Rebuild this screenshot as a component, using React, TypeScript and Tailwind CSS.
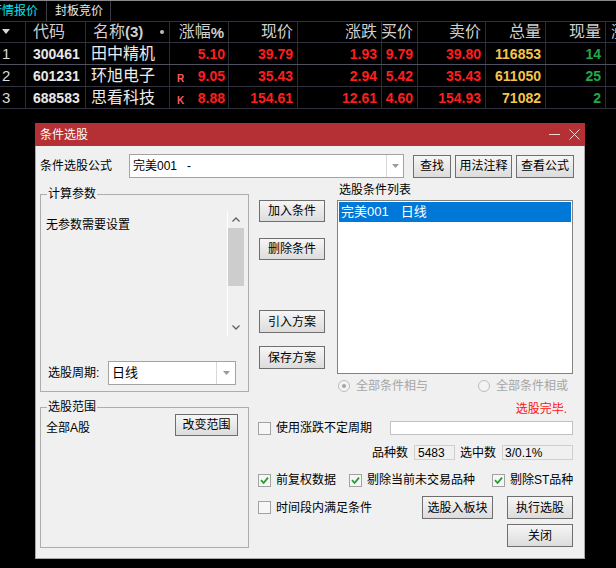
import React from 'react';

const FONT = "font-['Liberation_Sans','Noto_Sans_CJK_SC',sans-serif]";
const GRID = 'grid grid-cols-[26px_60px_84px_59px_69px_84px_36px_68px_60px_60px_10px]';

type Row = {
  no: string;
  code: string;
  name: string;
  tag?: string;
  pct: string;
  price: string;
  chg: string;
  bid: string;
  ask: string;
  vol: string;
  cur: string;
  line: string;
};

const rows: Row[] = [
  { no: '1', code: '300461', name: '田中精机', pct: '5.10', price: '39.79', chg: '1.93', bid: '9.79', ask: '39.80', vol: '116853', cur: '14', line: 'border-[#4f5060]' },
  { no: '2', code: '601231', name: '环旭电子', tag: 'R', pct: '9.05', price: '35.43', chg: '2.94', bid: '5.42', ask: '35.43', vol: '611050', cur: '25', line: 'border-[#30313c]' },
  { no: '3', code: '688583', name: '思看科技', tag: 'K', pct: '8.88', price: '154.61', chg: '12.61', bid: '4.60', ask: '154.93', vol: '71082', cur: '2', line: 'border-[#30313c]' },
];

const cell = 'border-r border-[#2a2c38] flex items-center overflow-hidden whitespace-nowrap';
const num = `${cell} justify-end pr-[4px]`;

function QuoteTable() {
  return (
    <div className="text-[#e6e6e6]">
      <div className="h-px bg-[#8a8a8a]" />
      <div className="h-[21px] flex border-b border-[#30313c] text-[12px]">
        <div className="w-[47px] border-r border-[#3a3b46] flex items-center overflow-hidden">
          <span className="ml-[-10px] text-[#00e4f0] whitespace-nowrap">行情报价</span>
        </div>
        <div className="w-[64px] border-r border-[#3a3b46] flex items-center pl-[8px] text-[#e8e8e8]">封板竞价</div>
      </div>
      <div className={`${GRID} h-[21px] border-b border-[#30313c] text-[16px] leading-none text-[#cfcfcf]`}>
        <div className={`${cell} pl-[2px]`}>
          <svg width="8" height="6" viewBox="0 0 8 6"><path d="M0 0H8L4 5Z" fill="#d8d8d8" /></svg>
        </div>
        <div className={`${cell} pl-[7px]`}>代码</div>
        <div className={`${cell} pl-[7px] justify-between pr-[5px]`}>
          <span>名称<span className="font-bold text-[15px]">(3)</span></span>
          <span className="w-[4px] h-[4px] rounded-full bg-[#bdbdbd]" />
        </div>
        <div className={`${num} pr-[3px]`}>涨幅<span className="font-bold text-[15px]">%</span></div>
        <div className={num}>现价</div>
        <div className={num}>涨跌</div>
        <div className={num}>买价</div>
        <div className={num}>卖价</div>
        <div className={num}>总量</div>
        <div className={num}>现量</div>
        <div className="flex items-center pl-[5px] overflow-hidden whitespace-nowrap">涨幅</div>
      </div>
      {rows.map((r) => (
        <div key={r.no} className={`${GRID} h-[22px] border-b ${r.line} text-[14px] leading-none`}>
          <div className={`${cell} pl-[2px] text-[15px] text-[#dcdcdc]`}>{r.no}</div>
          <div className={`${cell} pl-[7px] font-bold text-[#e8e8e8]`}>{r.code}</div>
          <div className={`${cell} pl-[5px] text-[16px] text-[#ececec]`}>{r.name}</div>
          <div className={`${cell} justify-between pl-[7px] pr-[3px] font-bold text-[#ff1e1e]`}>
            <span className="self-end pb-[2px] text-[10px] text-[#ff5a5a]">{r.tag ?? ''}</span>
            <span>{r.pct}</span>
          </div>
          <div className={`${num} font-bold text-[#ff1e1e]`}>{r.price}</div>
          <div className={`${num} font-bold text-[#ff1e1e]`}>{r.chg}</div>
          <div className={`${num} font-bold text-[#ff1e1e]`}>{r.bid}</div>
          <div className={`${num} font-bold text-[#ff1e1e]`}>{r.ask}</div>
          <div className={`${num} font-bold text-[#f7c44c]`}>{r.vol}</div>
          <div className={`${num} font-bold text-[#22a84a]`}>{r.cur}</div>
          <div />
        </div>
      ))}
    </div>
  );
}

function Btn({ className, children }: { className: string; children: React.ReactNode }) {
  return (
    <div className={`flex items-center justify-center border border-[#6f6f6f] bg-linear-to-b from-[#f6f6f6] to-[#dcdcdc] text-[12px] leading-none text-black whitespace-nowrap ${className}`}>
      {children}
    </div>
  );
}

function Check({ checked }: { checked?: boolean }) {
  return (
    <div className="w-[13px] h-[13px] shrink-0 border border-[#a2a2a2] bg-[#f6f6f6] flex items-center justify-center">
      {checked && (
        <svg width="9" height="9" viewBox="0 0 9 9">
          <path d="M1 4.2L3.6 7L8 1.6" stroke="#1e9e2a" strokeWidth="1.8" fill="none" />
        </svg>
      )}
    </div>
  );
}

function Radio({ on }: { on?: boolean }) {
  return (
    <div className="w-[12px] h-[12px] shrink-0 rounded-full border border-[#bdbdbd] bg-[#f3f3f3] flex items-center justify-center">
      {on && <div className="w-[4px] h-[4px] rounded-full bg-[#a4a4a4]" />}
    </div>
  );
}

function Arrow() {
  return (
    <svg width="7" height="4" viewBox="0 0 7 4"><path d="M0 0H7L3.5 4Z" fill="#9a9a9a" /></svg>
  );
}

function Dialog() {
  return (
    <div className="absolute left-[35px] top-[123px] w-[550px] h-[436px] flex flex-col text-[12px] text-black">
      <div className="h-[23px] shrink-0 bg-[#b43035] flex items-center pl-[5px] text-white">
        <span className="flex-1">条件选股</span>
        <div className="w-[11px] h-px bg-[#f2d6d6] mr-[9px]" />
        <svg width="11" height="11" viewBox="0 0 11 11" className="mr-[5px]">
          <path d="M0.5 0.5L10.5 10.5M10.5 0.5L0.5 10.5" stroke="#f2d6d6" strokeWidth="1" />
        </svg>
      </div>
      <div className="flex-1 bg-[#f0f0f0] border-x border-b border-[#a9a9a9]">
        <div className="mt-[8px] h-[24px] flex items-center">
          <div className="w-[93px] pl-[4px]">条件选股公式</div>
          <div className="w-[275px] h-[24px] bg-white border border-[#a3a3a3] flex items-center">
            <div className="flex-1 pl-[3px]">完美001<span className="ml-[10px]">-</span></div>
            <div className="w-[17px] h-full border-l border-[#d8d8d8] flex items-center justify-center"><Arrow /></div>
          </div>
          <Btn className="ml-[9px] w-[38px] h-[23px]">查找</Btn>
          <Btn className="ml-[4px] w-[57px] h-[23px]">用法注释</Btn>
          <Btn className="ml-[4px] w-[58px] h-[23px]">查看公式</Btn>
        </div>

        <div className="mt-[4px] flex">
          <div className="ml-[4px] w-[209px]">
            <div className="mt-[12px] h-[198px] relative border border-[#adadad]">
              <span className="absolute left-[6px] -top-[8px] px-px bg-[#f0f0f0] leading-[14px]">计算参数</span>
              <div className="pt-[16px] h-[141px] flex">
                <div className="flex-1 pl-[5px] pt-[7px] leading-[14px]">无参数需要设置</div>
                <div className="w-[17px] mr-[4px] border-l border-white flex flex-col">
                  <div className="h-[17px] flex items-center justify-center">
                    <svg width="8" height="5" viewBox="0 0 8 5"><path d="M0.5 4.5L4 1L7.5 4.5" stroke="#606060" strokeWidth="1.3" fill="none" /></svg>
                  </div>
                  <div className="h-[58px] bg-[#cdcdcd]" />
                  <div className="flex-1" />
                  <div className="h-[17px] flex items-center justify-center">
                    <svg width="8" height="5" viewBox="0 0 8 5"><path d="M0.5 0.5L4 4L7.5 0.5" stroke="#606060" strokeWidth="1.3" fill="none" /></svg>
                  </div>
                </div>
              </div>
              <div className="mt-[25px] h-[24px] flex items-center">
                <div className="w-[67px] pl-[7px]">选股周期:</div>
                <div className="w-[128px] h-[24px] bg-white border border-[#a3a3a3] flex items-center">
                  <div className="flex-1 pl-[3px] text-[13px]">日线</div>
                  <div className="w-[19px] h-full border-l border-[#d8d8d8] flex items-center justify-center"><Arrow /></div>
                </div>
              </div>
            </div>
            <div className="mt-[15px] h-[141px] relative border border-[#adadad]">
              <span className="absolute left-[6px] -top-[8px] px-px bg-[#f0f0f0] leading-[14px]">选股范围</span>
              <div className="pt-[6px] flex justify-between items-start">
                <div className="pl-[5px] pt-[7px] leading-[14px]">全部A股</div>
                <Btn className="mr-[10px] w-[63px] h-[22px]">改变范围</Btn>
              </div>
            </div>
          </div>

          <div className="ml-[9px] w-[316px]">
            <div className="flex">
              <div className="ml-px w-[66px] flex flex-col">
                <Btn className="mt-[18px] h-[22px]">加入条件</Btn>
                <Btn className="mt-[16px] h-[22px]">删除条件</Btn>
                <Btn className="mt-[50px] h-[23px]">引入方案</Btn>
                <Btn className="mt-[13px] h-[23px]">保存方案</Btn>
              </div>
              <div className="ml-[12px] w-[236px]">
                <div className="h-[18px] pl-[2px] leading-[16px]">选股条件列表</div>
                <div className="h-[174px] bg-white border border-[#828282] p-px">
                  <div className="h-[20px] bg-[#0078d7] text-white text-[13px] flex items-center pl-[2px]">
                    完美001<span className="ml-[12px]">日线</span>
                  </div>
                </div>
                <div className="mt-[4px] h-[16px] flex items-center text-[#a6a6a6]">
                  <div className="ml-px"><Radio on /></div>
                  <span className="ml-[6px]">全部条件相与</span>
                  <div className="ml-[50px]"><Radio /></div>
                  <span className="ml-[6px]">全部条件相或</span>
                </div>
              </div>
            </div>

            <div className="mt-[7px] h-[16px] leading-[16px] text-right pr-[7px] text-[#ff1010]">选股完毕.</div>
            <div className="mt-[3px] h-[16px] flex items-center">
              <Check />
              <span className="ml-[5px]">使用涨跌不定周期</span>
              <div className="ml-auto mr-px w-[183px] h-[14px] bg-white border border-[#c2c2c2]" />
            </div>
            <div className="mt-[9px] h-[15px] flex items-center justify-end pr-px">
              <span>品种数</span>
              <div className="ml-[6px] w-[41px] h-[15px] border border-[#cfcfcf] flex items-center pl-[3px]">5483</div>
              <span className="ml-[5px]">选中数</span>
              <div className="ml-[6px] w-[71px] h-[15px] border border-[#cfcfcf] flex items-center pl-[2px]">3/0.1%</div>
            </div>
            <div className="mt-[12px] h-[16px] flex items-center">
              <Check checked />
              <span className="ml-[5px]">前复权数据</span>
              <div className="ml-[13px]"><Check checked /></div>
              <span className="ml-[5px]">剔除当前未交易品种</span>
              <div className="ml-[17px]"><Check checked /></div>
              <span className="ml-[5px]">剔除ST品种</span>
            </div>
            <div className="mt-[8px] h-[23px] flex items-center">
              <Check />
              <span className="ml-[5px]">时间段内满足条件</span>
              <Btn className="ml-auto w-[71px] h-[23px]">选股入板块</Btn>
              <Btn className="ml-[14px] mr-px w-[66px] h-[23px]">执行选股</Btn>
            </div>
            <div className="mt-[5px] flex justify-end pr-px">
              <Btn className="w-[66px] h-[23px]">关闭</Btn>
            </div>
          </div>
        </div>
      </div>
    </div>
  );
}

export default function App() {
  return (
    <div className={`relative w-[616px] h-[568px] bg-black overflow-hidden ${FONT}`}>
      <QuoteTable />
      <Dialog />
    </div>
  );
}
